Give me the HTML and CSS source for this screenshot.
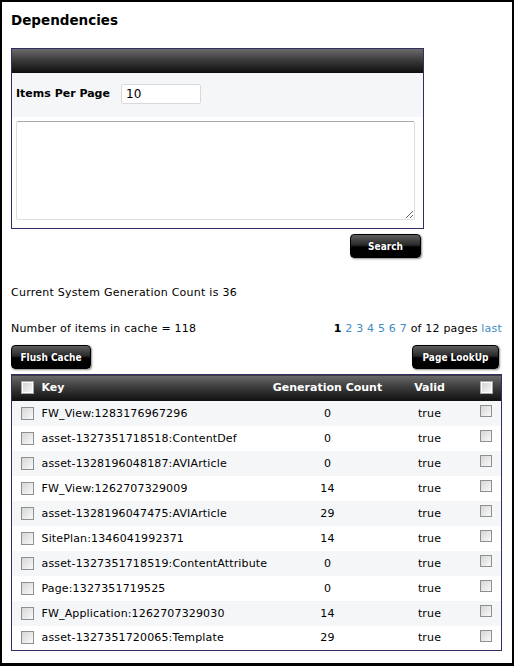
FILE: index.html
```html
<!DOCTYPE html>
<html>
<head>
<meta charset="utf-8">
<link rel="stylesheet" href="styles.css">
</head>
<body>
<div class="frame">
  <h1 class="title">Dependencies</h1>

  <div class="panel">
    <div class="panel-head"></div>
    <div class="panel-row panel-row--grey">
      <label class="field-label" for="ipp">Items Per Page</label>
      <input class="field-input" id="ipp" type="text" value="10">
    </div>
    <div class="panel-row panel-row--white">
      <textarea class="query"></textarea>
    </div>
  </div>

  <div class="search-bar">
    <button class="btn btn--search">Search</button>
  </div>

  <p class="gen-count">Current System Generation Count is 36</p>

  <div class="info-row">
    <span>Number of items in cache = 118</span>
    <span class="pager"><b>1</b> <a href="#">2</a> <a href="#">3</a> <a href="#">4</a> <a href="#">5</a> <a href="#">6</a> <a href="#">7</a> of 12 pages <a href="#">last</a></span>
  </div>

  <div class="btn-row">
    <button class="btn btn--flush">Flush Cache</button>
    <button class="btn btn--lookup">Page LookUp</button>
  </div>

  <table class="grid">
    <colgroup>
      <col class="c-cb"><col class="c-key"><col class="c-count"><col class="c-valid"><col class="c-cb2">
    </colgroup>
    <thead>
      <tr>
        <th class="cell-cb"><span class="cb cb--head"></span></th>
        <th class="cell-key">Key</th>
        <th class="cell-count">Generation Count</th>
        <th class="cell-valid">Valid</th>
        <th class="cell-cb2"><span class="cb cb--head"></span></th>
      </tr>
    </thead>
    <tbody>
      <tr><td class="cell-cb"><span class="cb"></span></td><td class="cell-key">FW_View:1283176967296</td><td class="cell-count">0</td><td class="cell-valid">true</td><td class="cell-cb2"><span class="cb"></span></td></tr>
      <tr><td class="cell-cb"><span class="cb"></span></td><td class="cell-key">asset-1327351718518:ContentDef</td><td class="cell-count">0</td><td class="cell-valid">true</td><td class="cell-cb2"><span class="cb"></span></td></tr>
      <tr><td class="cell-cb"><span class="cb"></span></td><td class="cell-key">asset-1328196048187:AVIArticle</td><td class="cell-count">0</td><td class="cell-valid">true</td><td class="cell-cb2"><span class="cb"></span></td></tr>
      <tr><td class="cell-cb"><span class="cb"></span></td><td class="cell-key">FW_View:1262707329009</td><td class="cell-count">14</td><td class="cell-valid">true</td><td class="cell-cb2"><span class="cb"></span></td></tr>
      <tr><td class="cell-cb"><span class="cb"></span></td><td class="cell-key">asset-1328196047475:AVIArticle</td><td class="cell-count">29</td><td class="cell-valid">true</td><td class="cell-cb2"><span class="cb"></span></td></tr>
      <tr><td class="cell-cb"><span class="cb"></span></td><td class="cell-key">SitePlan:1346041992371</td><td class="cell-count">14</td><td class="cell-valid">true</td><td class="cell-cb2"><span class="cb"></span></td></tr>
      <tr><td class="cell-cb"><span class="cb"></span></td><td class="cell-key">asset-1327351718519:ContentAttribute</td><td class="cell-count">0</td><td class="cell-valid">true</td><td class="cell-cb2"><span class="cb"></span></td></tr>
      <tr><td class="cell-cb"><span class="cb"></span></td><td class="cell-key">Page:1327351719525</td><td class="cell-count">0</td><td class="cell-valid">true</td><td class="cell-cb2"><span class="cb"></span></td></tr>
      <tr><td class="cell-cb"><span class="cb"></span></td><td class="cell-key">FW_Application:1262707329030</td><td class="cell-count">14</td><td class="cell-valid">true</td><td class="cell-cb2"><span class="cb"></span></td></tr>
      <tr><td class="cell-cb"><span class="cb"></span></td><td class="cell-key">asset-1327351720065:Template</td><td class="cell-count">29</td><td class="cell-valid">true</td><td class="cell-cb2"><span class="cb"></span></td></tr>
    </tbody>
  </table>
</div>
</body>
</html>
```

FILE: styles.css
```css
* { box-sizing: border-box; }
html, body { margin: 0; padding: 0; background: #fff; }
body {
  font-family: "DejaVu Sans", Verdana, sans-serif;
  font-size: 11px;
  color: #000;
}
.frame {
  width: 514px;
  height: 666px;
  border: 2px solid #000;
  border-bottom-width: 3px;
  padding: 9px 10px 0 9px;
  overflow: hidden;
}
.title {
  margin: 0;
  padding-top: 1px;
  font-size: 13.5px;
  font-weight: bold;
  line-height: 17px;
  height: 37px;
}
.panel {
  width: 413px;
  border: 1px solid #2f2f66;
}
.panel-head {
  height: 24px;
  background: linear-gradient(#6b6b6b, #3c3c3c 45%, #0e0e0e);
}
.panel-row--grey {
  height: 44px;
  background: #f5f6f8;
  display: flex;
  align-items: center;
  padding: 0 0 3px 4px;
}
.field-label {
  width: 105px;
  font-weight: bold;
  font-size: 11px;
}
.field-input {
  width: 80px;
  height: 20px;
  border: 1px solid #d7d9dd;
  border-radius: 2px;
  padding: 0 4px;
  font-family: "DejaVu Sans", Verdana, sans-serif;
  font-size: 12px;
  color: #000;
  background: #fff;
  outline: none;
}
.panel-row--white {
  background: #fff;
  padding: 4px 8px 8px 4px;
}
.query {
  display: block;
  width: 399px;
  height: 99px;
  border: 1px solid #dcdde0;
  border-top-color: #a9a9a9;
  border-radius: 2px;
  resize: both;
  margin: 0;
  outline: none;
}
.search-bar {
  width: 413px;
  display: flex;
  justify-content: flex-end;
  padding: 5px 3px 0 0;
}
.btn {
  height: 24px;
  border: 1px solid #000;
  border-radius: 4px;
  background: linear-gradient(#5e5e5e, #2a2a2a 45%, #000 55%, #000);
  color: #fff;
  font-family: "DejaVu Sans Condensed", "DejaVu Sans", Tahoma, sans-serif;
  font-weight: bold;
  font-size: 10px;
  text-shadow: 0 0 1px #000;
  box-shadow: 1px 1px 2px rgba(0,0,0,0.45);
  padding: 0;
  cursor: pointer;
}
.btn--search { width: 71px; }
.btn--flush { width: 80px; }
.btn--lookup { width: 87px; }
.gen-count {
  margin: 28px 0 0;
  line-height: 14px;
  letter-spacing: 0.25px;
}
.info-row {
  margin-top: 22px;
  display: flex;
  justify-content: space-between;
  line-height: 14px;
  letter-spacing: 0.2px;
}
.pager a { color: #3d8cc4; text-decoration: none; }
.pager b { font-weight: bold; }
.btn-row {
  margin-top: 9px;
  display: flex;
  justify-content: space-between;
  padding-right: 3px;
}
.grid {
  margin-top: 5px;
  width: 490px;
  border-collapse: collapse;
  table-layout: fixed;
  border: 1px solid #2f2f66;
}
.c-cb { width: 26px; }
.c-key { width: 225px; }
.c-count { width: 130px; }
.c-valid { width: 74px; }
.c-cb2 { width: 35px; }
.grid th {
  height: 26px;
  padding: 0;
  background: linear-gradient(#6b6b6b, #3c3c3c 45%, #0e0e0e);
  color: #fff;
  font-weight: bold;
  font-size: 11px;
  text-align: left;
  vertical-align: middle;
}
.grid td {
  height: 25px;
  padding: 0;
  vertical-align: middle;
  white-space: nowrap;
  letter-spacing: 0.15px;
}
.grid tbody tr:nth-child(odd) { background: #f5f6f8; }
.grid tbody tr:nth-child(even) { background: #fff; }
.cell-cb { padding-left: 9px !important; }
.cell-key { padding-left: 4px !important; }
.grid .cell-count, .grid .cell-valid { text-align: center; }
.grid td.cell-cb2 { vertical-align: top; padding-top: 4px !important; }
.cell-cb2 { padding-left: 13px !important; }
.cb {
  display: block;
  width: 13px;
  height: 13px;
  border: 1px solid #8e8f8f;
  background: linear-gradient(135deg, #d6d6d6, #f9f9f9);
}
.cb--head {
  border-color: #a6a6a6;
  box-shadow: inset 0 0 0 1px #fff;
  background: linear-gradient(135deg, #cfcfcf, #fafafa);
}
.cell-cb2 .cb { width: 12px; height: 12px; margin-top: 0; }
th.cell-cb2 .cb { width: 13px; height: 13px; }
```
